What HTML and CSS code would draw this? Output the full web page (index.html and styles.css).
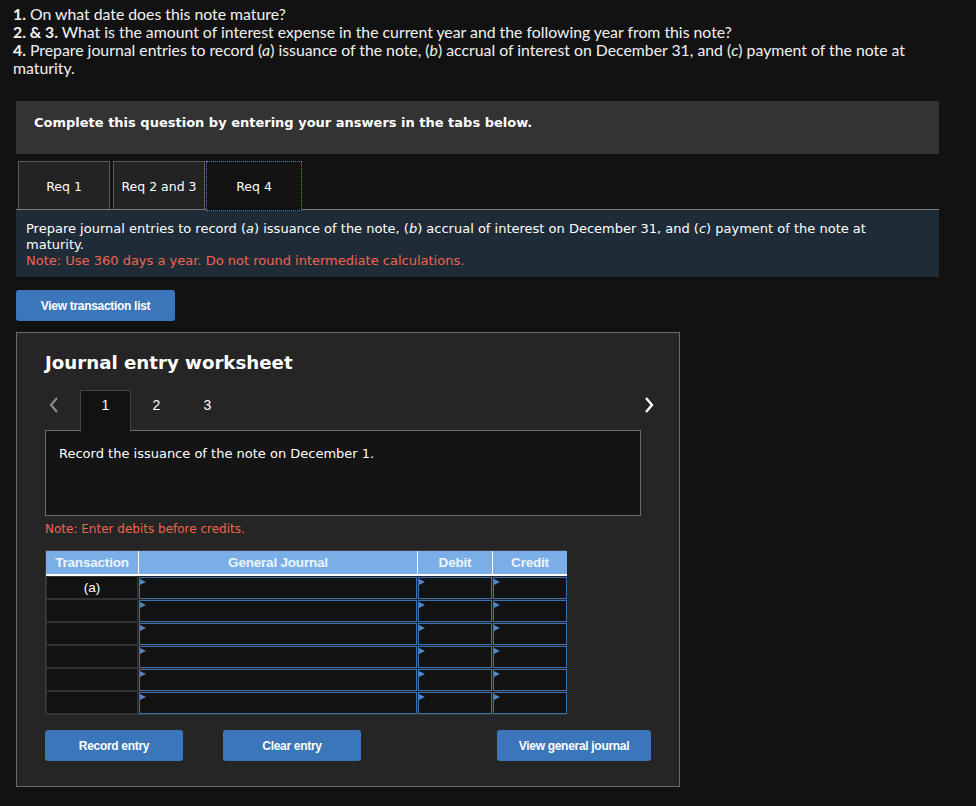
FILE: index.html
```html
<!DOCTYPE html>
<html>
<head>
<meta charset="utf-8">
<link rel="stylesheet" href="styles.css">
</head>
<body>
<div class="questions">
  <p><b>1.</b> On what date does this note mature?</p>
  <p><b>2. &amp; 3.</b> What is the amount of interest expense in the current year and the following year from this note?</p>
  <p><b>4.</b> Prepare journal entries to record (<i>a</i>) issuance of the note, (<i>b</i>) accrual of interest on December 31, and (<i>c</i>) payment of the note at maturity.</p>
</div>

<div class="banner">Complete this question by entering your answers in the tabs below.</div>

<div class="tabs">
  <div class="tab">Req 1</div>
  <div class="tab">Req 2 and 3</div>
  <div class="tab active">Req 4</div>
</div>

<div class="panel">
  <p>Prepare journal entries to record (<i>a</i>) issuance of the note, (<i>b</i>) accrual of interest on December 31, and (<i>c</i>) payment of the note at maturity.</p>
  <p class="note">Note: Use 360 days a year. Do not round intermediate calculations.</p>
</div>

<div class="btn-row">
  <button class="btn btn-list">View transaction list</button>
</div>

<div class="worksheet">
  <h2 class="ws-title">Journal entry worksheet</h2>
  <div class="ws-nav">
    <span class="chev chev-left"><svg width="12" height="18" viewBox="0 0 12 18"><polyline points="9,2 3,9 9,16" fill="none" stroke="#8a8a8a" stroke-width="2.2"/></svg></span>
    <span class="step active">1</span>
    <span class="step">2</span>
    <span class="step">3</span>
    <span class="chev chev-right"><svg width="12" height="18" viewBox="0 0 12 18"><polyline points="3,2 9,9 3,16" fill="none" stroke="#ffffff" stroke-width="2.4"/></svg></span>
  </div>
  <div class="ws-desc">Record the issuance of the note on December 1.</div>
  <p class="ws-note">Note: Enter debits before credits.</p>

  <div class="jtable">
    <div class="th">Transaction</div>
    <div class="th">General Journal</div>
    <div class="th">Debit</div>
    <div class="th">Credit</div>

    <div class="tcell">(a)</div><div class="icell"></div><div class="icell"></div><div class="icell"></div>
    <div class="tcell"></div><div class="icell"></div><div class="icell"></div><div class="icell"></div>
    <div class="tcell"></div><div class="icell"></div><div class="icell"></div><div class="icell"></div>
    <div class="tcell"></div><div class="icell"></div><div class="icell"></div><div class="icell"></div>
    <div class="tcell"></div><div class="icell"></div><div class="icell"></div><div class="icell"></div>
    <div class="tcell"></div><div class="icell"></div><div class="icell"></div><div class="icell"></div>
  </div>

  <div class="ws-actions">
    <button class="btn btn-record">Record entry</button>
    <button class="btn btn-clear">Clear entry</button>
    <button class="btn btn-view">View general journal</button>
  </div>
</div>
</body>
</html>
```

FILE: styles.css
```css
* { box-sizing: border-box; }
html, body { margin: 0; padding: 0; background: #121212; }
body { width: 976px; min-height: 806px; color: #fff; }

.questions {
  padding: 5px 0 0 13px;
  width: 935px;
  font-family: Lato, "Open Sans", sans-serif;
  font-size: 15.8px;
  line-height: 18px;
  color: #f2f2f2;
  height: 101px;
}
.questions p { margin: 0; }
.questions b { font-weight: 700; }

.banner {
  margin-left: 16px;
  width: 923px;
  height: 53px;
  background: #333333;
  font-family: "DejaVu Sans", Verdana, sans-serif;
  font-weight: bold;
  font-size: 13px;
  line-height: 16px;
  padding: 14px 0 0 18px;
  color: #fff;
}

.tabs {
  margin: 7px 0 0 18px;
  display: flex;
  gap: 3px;
  height: 48px;
  position: relative;
  z-index: 1;
}
.tab {
  width: 92px;
  height: 48px;
  border: 1px solid #5c5c5c;
  border-bottom: none;
  background: #232323;
  font-family: "DejaVu Sans", Verdana, sans-serif;
  font-size: 12.5px;
  display: flex;
  align-items: center;
  justify-content: center;
  padding-top: 2px;
  color: #fff;
}
.tab.active {
  width: 96px;
  height: 50px;
  margin-left: -2px;
  background: #121212;
  border: 1px dotted #4a86c8;
  outline: 1px dotted #4a86c8;
  outline-offset: -1px;
  padding-top: 0;
}

.panel {
  margin-left: 16px;
  width: 923px;
  height: 68px;
  background: #1f2c37;
  border-top: 1px solid #7a7a7a;
  padding: 11px 50px 0 10px;
  font-family: "DejaVu Sans", Verdana, sans-serif;
  font-size: 13px;
  line-height: 16px;
  color: #fff;
}
.panel p { margin: 0; }
.panel .note { color: #f0644c; }

.btn-row { margin: 13px 0 0 16px; }
.btn {
  border: none;
  border-radius: 3px;
  background: #3a76b9;
  color: #fff;
  font-family: "Liberation Sans", Arial, sans-serif;
  font-weight: bold;
  font-size: 12px;
  letter-spacing: -0.3px;
  height: 31px;
  padding: 0;
  display: block;
}
.btn-list { width: 159px; }

.worksheet {
  margin: 11px 0 0 16px;
  width: 664px;
  background: #252525;
  border: 1px solid #6b6b6b;
  padding: 17px 0 25px 28px;
}
.ws-title {
  margin: 0;
  font-family: "DejaVu Sans", Verdana, sans-serif;
  font-weight: bold;
  font-size: 18.2px;
  line-height: 26px;
  color: #fff;
}
.ws-nav {
  margin-top: 14px;
  display: flex;
  align-items: flex-start;
  height: 41px;
  width: 610px;
  position: relative;
  z-index: 1;
}
.chev { display: flex; align-items: center; padding-top: 6px; }
.chev-left { margin-left: 3px; width: 32px; }
.chev-right { margin-left: auto; }
.step {
  width: 51px;
  height: 41px;
  display: flex;
  justify-content: center;
  font-family: "Liberation Sans", Arial, sans-serif;
  font-size: 14px;
  line-height: 16px;
  color: #fff;
  padding-top: 7px;
}
.step.active {
  background: #121212;
  border: 1px solid #444;
  border-bottom: none;
  height: 42px;
  padding-top: 6px;
}
.ws-desc {
  width: 596px;
  height: 86px;
  margin-top: -1px;
  background: #141414;
  border: 1px solid #6b6b6b;
  padding: 14px 13px;
  font-family: "DejaVu Sans", Verdana, sans-serif;
  font-size: 13px;
  line-height: 17px;
  color: #fff;
}
.ws-note {
  margin: 5px 0 0 0;
  font-family: "DejaVu Sans", Verdana, sans-serif;
  font-size: 12px;
  line-height: 16px;
  color: #f0644c;
}

.jtable {
  margin-top: 13px;
  display: grid;
  grid-template-columns: 92px 279px 75px 75px;
  grid-template-rows: 25px repeat(6, 23px);
  width: 521px;
  border: 1px solid #3a3a3a;
  border-top-color: #444;
  background: #252525;
}
.jtable .th {
  background: #7aaee6;
  color: #eef4fb;
  font-family: "Liberation Sans", Arial, sans-serif;
  font-weight: bold;
  font-size: 13.5px;
  letter-spacing: -0.2px;
  display: flex;
  align-items: center;
  justify-content: center;
  border-bottom: 2px solid #fff;
  border-left: 1px solid #fff;
}
.jtable .th:first-child { border-left: none; }
.tcell {
  background: #121212;
  border: 1px solid #333;
  font-family: "Liberation Sans", Arial, sans-serif;
  font-size: 13.5px;
  color: #fff;
  display: flex;
  align-items: center;
  justify-content: center;
}
.icell {
  background: #121212;
  border: 1px solid #3b70b3;
  margin: 1px 0 0 1px;
  position: relative;
}
.icell::before {
  content: "";
  position: absolute;
  left: 0;
  top: 1px;
  border-left: 6px solid #4f86cc;
  border-top: 3.5px solid transparent;
  border-bottom: 3.5px solid transparent;
}

.ws-actions {
  margin-top: 15px;
  display: flex;
}
.btn-record { width: 138px; }
.btn-clear { width: 138px; margin-left: 40px; }
.btn-view { width: 154px; margin-left: 136px; }
```
